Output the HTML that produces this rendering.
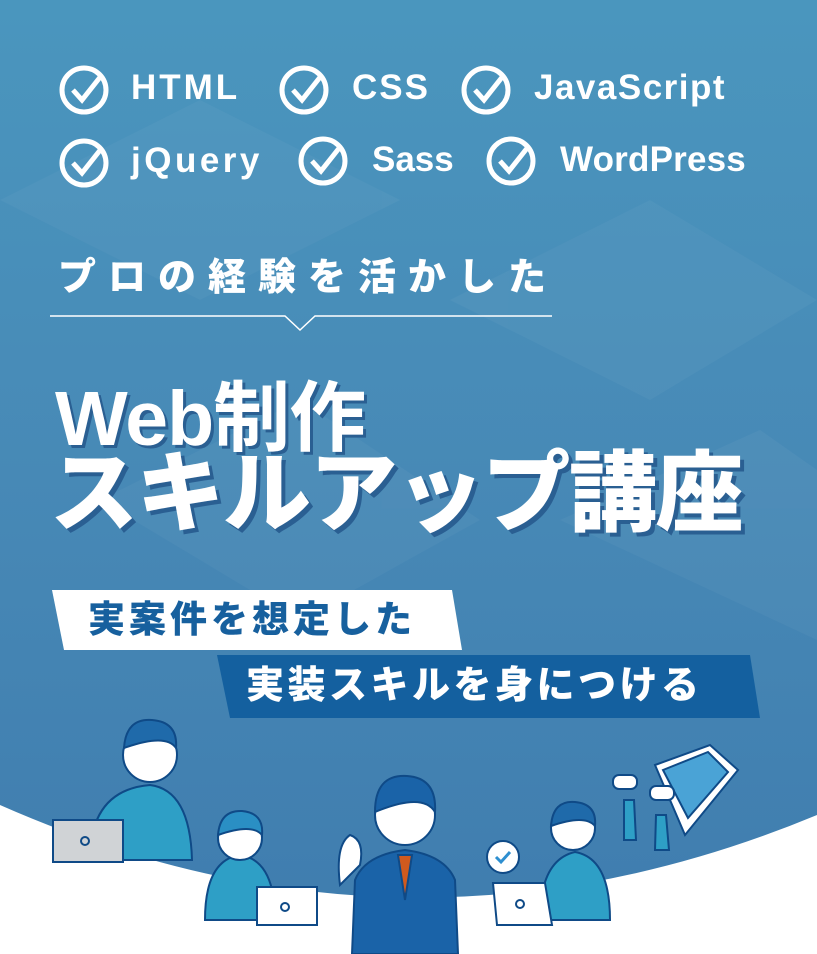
<!DOCTYPE html>
<html><head><meta charset="utf-8"><style>
*{margin:0;padding:0;box-sizing:border-box}
body{width:817px;height:954px;overflow:hidden;position:relative;background:linear-gradient(180deg,#4a96be 0%,#4789b6 50%,#3f7cae 100%);font-family:"Liberation Sans","Noto Sans CJK JP",sans-serif;color:#fff}
.a{position:absolute}
.t{font-weight:bold;font-size:35px;white-space:nowrap;letter-spacing:1px}
.h{font-family:"Noto Sans CJK JP","Liberation Sans",sans-serif;font-weight:900;white-space:nowrap}
</style></head><body>
<svg class="a" style="left:0;top:0" width="817" height="954">
<g fill="#fff" opacity=".035">
<polygon points="0,200 200,100 400,200 200,300"/><polygon points="450,300 650,200 817,300 650,400"/>
<polygon points="100,500 300,400 480,520 300,620"/><polygon points="560,520 760,430 817,470 817,640"/>
</g>
<g fill="none" stroke="#fff" stroke-width="5">
<circle cx="84" cy="90" r="22"/><path d="M73 90l9 10 19-24"/>
<circle cx="304" cy="90" r="22"/><path d="M293 90l9 10 19-24"/>
<circle cx="486" cy="90" r="22"/><path d="M475 90l9 10 19-24"/>
<circle cx="84" cy="163" r="22"/><path d="M73 163l9 10 19-24"/>
<circle cx="323" cy="161" r="22"/><path d="M312 161l9 10 19-24"/>
<circle cx="511" cy="161" r="22"/><path d="M500 161l9 10 19-24"/>
</g>
<path d="M50 316H285l15 14 15-14H552" fill="none" stroke="#fff" stroke-width="1.5"/>
<polygon points="52,590 452,590 462,650 64,650" fill="#fff"/>
<polygon points="217,655 750,655 760,718 230,718" fill="#14609f"/>
<path d="M0,805 Q408,985 817,815 L817,954 L0,954 Z" fill="#fff"/>
<g stroke="#0f4a87" stroke-width="2">
<path d="M90 860 Q90 790 150 785 Q190 790 192 860 Z" fill="#2e9fc6"/>
<circle cx="150" cy="755" r="27" fill="#fff"/><path d="M124 748q2-30 28-28q26 2 24 28q-10-15-52 0z" fill="#1f6aaa"/>
<rect x="53" y="820" width="70" height="42" fill="#d0d3d6"/><circle cx="85" cy="841" r="4" fill="none"/>
<path d="M205 920 Q205 860 240 855 Q275 860 275 920 Z" fill="#2e9fc6"/>
<circle cx="240" cy="838" r="22" fill="#fff"/><path d="M218 835q2-25 24-24q22 2 20 24q-10-12-44 0z" fill="#2a8fc4"/>
<rect x="257" y="887" width="60" height="38" fill="#fff"/><circle cx="285" cy="907" r="4" fill="none"/>
<path d="M352 954 L355 880 Q365 855 405 850 Q445 855 455 880 L458 954 Z" fill="#1a63a8"/>
<path d="M398 855 L405 900 L412 855Z" fill="#d05a1e"/>
<circle cx="405" cy="815" r="30" fill="#fff"/><path d="M375 812q0-38 32-36q30 2 28 36q-12-20-60 0z" fill="#1a63a8"/>
<path d="M340 885 q-5-40 10-50 q15 5 10 30z" fill="#fff"/>
<path d="M540 920 Q540 860 575 852 Q610 858 610 920 Z" fill="#2e9fc6"/>
<circle cx="573" cy="828" r="22" fill="#fff"/><path d="M551 826q2-26 24-24q22 2 20 24q-10-12-44 0z" fill="#1f6aaa"/>
<path d="M493 883 L545 883 L552 925 L497 925Z" fill="#fff"/><circle cx="520" cy="904" r="4" fill="none"/>
<circle cx="503" cy="857" r="16" fill="#fff"/><path d="M496 857l5 5 9-10" fill="none" stroke="#2e8fd0" stroke-width="3"/>
<path d="M655 765 L710 745 L738 770 L685 835 Z" fill="#fff"/><path d="M663 770 L708 752 L728 772 L688 818Z" fill="#4aa3d6"/>
<rect x="613" y="775" width="24" height="14" rx="6" fill="#fff"/><rect x="650" y="786" width="24" height="14" rx="6" fill="#fff"/>
<path d="M624 800 l10 0 l2 40 l-12 0z" fill="#2e9fc6"/><path d="M656 815 l10 0 l3 35 l-14 0z" fill="#2e9fc6"/>
</g>
</svg>
<div class="a t" style="left:131px;top:68px;letter-spacing:3px">HTML</div>
<div class="a t" style="left:352px;top:68px;letter-spacing:2px">CSS</div>
<div class="a t" style="left:534px;top:68px;letter-spacing:1.5px">JavaScript</div>
<div class="a t" style="left:131px;top:141px;letter-spacing:3.5px">jQuery</div>
<div class="a t" style="left:372px;top:140px;letter-spacing:0">Sass</div>
<div class="a t" style="left:560px;top:140px;letter-spacing:0.2px">WordPress</div>
<div class="a h" style="left:58px;top:246px;font-size:38px;letter-spacing:12px">プロの経験を活かした</div>
<div class="a" style="left:55px;top:357px;font-size:77px;font-weight:bold;letter-spacing:-1px;font-family:'Liberation Sans','Noto Sans CJK JP',sans-serif;white-space:nowrap;text-shadow:3px 3px 0 #2a5f92">Web制作</div>
<div class="a h" style="left:50px;top:439px;font-size:88px;letter-spacing:-1.5px;line-height:1.1;text-shadow:4px 4px 0 #2a5f92">スキルアップ講座</div>
<div class="a h" style="left:88px;top:589px;font-size:37px;color:#17609e;letter-spacing:4px">実案件を想定した</div>
<div class="a h" style="left:246px;top:654px;font-size:38px;letter-spacing:3.5px">実装スキルを身につける</div>
</body></html>
